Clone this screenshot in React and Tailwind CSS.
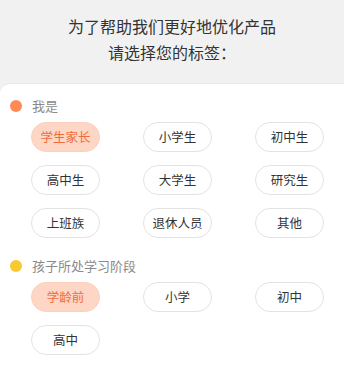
const groups = [
  {
    title: '我是',
    dot: 'bg-[#ff8a55]',
    items: ['学生家长', '小学生', '初中生', '高中生', '大学生', '研究生', '上班族', '退休人员', '其他'],
    selected: '学生家长',
  },
  {
    title: '孩子所处学习阶段',
    dot: 'bg-[#f9c932]',
    items: ['学龄前', '小学', '初中', '高中'],
    selected: '学龄前',
  },
];

function Chip({ label, active }) {
  return (
    <div
      className={
        active
          ? 'h-[30px] w-[69px] rounded-full border border-[#fcd0bd] bg-[#fdd6c5] flex items-center justify-center text-[12.5px] text-[#f26b3a]'
          : 'h-[30px] w-[69px] rounded-full border border-[#e3e3e3] bg-white flex items-center justify-center text-[12.5px] text-[#333]'
      }
    >
      {label}
    </div>
  );
}

export default function App() {
  return (
    <div
      className="w-[344px] h-[391px] bg-[#f1f1f1] flex flex-col overflow-hidden"
      style={{ fontFamily: '"Noto Sans CJK SC", "Noto Sans", sans-serif' }}
    >
      <div className="pt-[13px] h-[83px] text-center text-[16px] leading-[26px] text-[#333]">
        <div>为了帮助我们更好地优化产品</div>
        <div>请选择您的标签：</div>
      </div>
      <div className="flex-1 bg-white rounded-tl-[10px] border-t border-[#e8e8e8] pt-[12px]">
        {groups.map((g, i) => (
          <div key={g.title} className={i > 0 ? 'mt-[18px]' : ''}>
            <div className="flex items-center h-5 pl-[10px]">
              <span className={`w-[12px] h-[12px] rounded-full ${g.dot}`} />
              <span className="ml-[10px] text-[13px] text-[#8a8a8a]">{g.title}</span>
            </div>
            <div className="mt-[6px] pl-[31px] grid grid-cols-[69px_69px_69px] gap-x-[43px] gap-y-[13px]">
              {g.items.map((it) => (
                <Chip key={it} label={it} active={it === g.selected} />
              ))}
            </div>
          </div>
        ))}
      </div>
    </div>
  );
}
